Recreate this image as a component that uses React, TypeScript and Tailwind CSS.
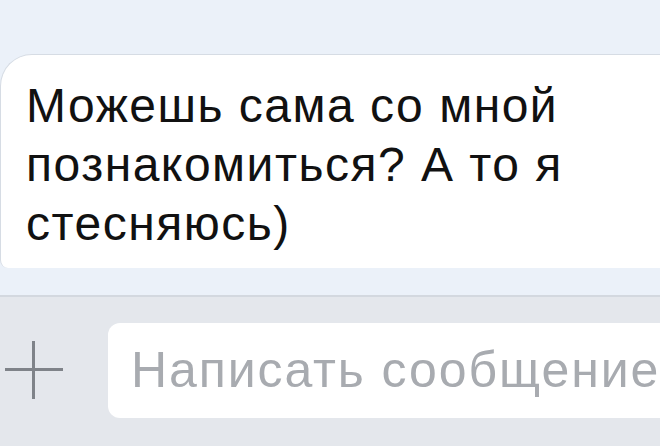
import React from 'react';

const PlusIcon: React.FC = () => (
  <svg width="60" height="60" viewBox="0 0 60 60" className="shrink-0">
    <path d="M1 29.5h58M29.5 1v58" stroke="#7f8389" strokeWidth="3" fill="none" />
  </svg>
);

export default function App() {
  return (
    <div
      className="w-[660px] h-[446px] overflow-hidden bg-[#ebf1f9] flex flex-col"
      style={{ fontFamily: '"Liberation Sans", Arial, sans-serif' }}
    >
      <div className="h-[54px] shrink-0" />

      <div className="h-[214px] shrink-0 w-[700px] bg-white border-t border-l border-[#d6dce4] rounded-tl-[32px] rounded-bl-[8px] pl-[25px] pt-[21px]">
        <p className="text-[48px] leading-[59px] text-[#111111] tracking-[1.5px]">
          Можешь сама со мной
          <br />
          познакомиться? А то я
          <br />
          стесняюсь)
        </p>
      </div>

      <div className="h-[29px] shrink-0 border-b-2 border-[#d3d8df]" />

      <div className="flex-1 bg-[#e4e7ec] flex items-start gap-[44px] pl-[4px] pt-[26px]">
        <div className="pt-[17px]">
          <PlusIcon />
        </div>
        <div className="h-[95px] w-[600px] shrink-0 bg-white rounded-[12px] flex items-center pl-[23px]">
          <span className="text-[50px] text-[#a8abb0] whitespace-nowrap tracking-[1.9px]">Написать сообщение</span>
        </div>
      </div>
    </div>
  );
}
